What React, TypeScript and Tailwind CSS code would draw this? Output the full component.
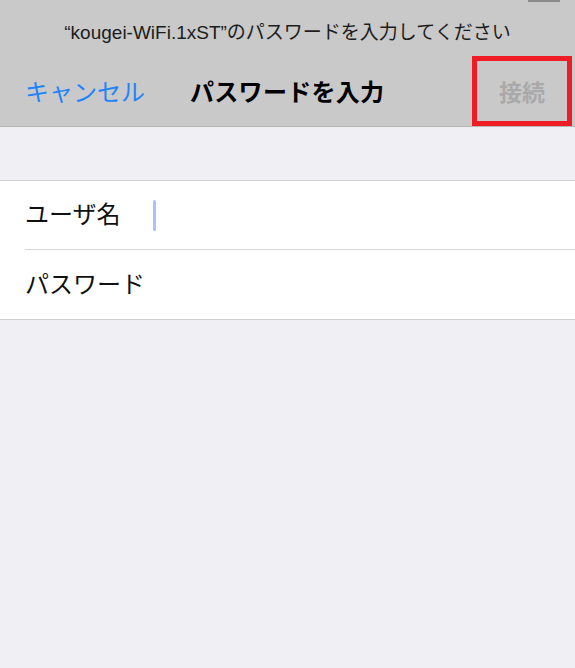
import React from 'react';

const font = { fontFamily: '"Liberation Sans", "Noto Sans CJK JP", sans-serif' };

export default function App() {
  return (
    <div className="min-h-[668px] w-[575px] bg-[#efeff4] overflow-hidden" style={font}>
      {/* Header */}
      <header className="relative bg-[#c9c9c9] border-b border-[#b5b5b5]">
        <div className="absolute top-0 right-[15px] h-[2px] w-[32px] bg-[#8a8a8a]" />
        <div className="h-[56px] pt-[10px] flex items-center justify-center text-[19px] text-[#1c1c1c]">
          “kougei-WiFi.1xST”のパスワードを入力してください
        </div>
        <div className="h-[70px] flex items-center">
          <button className="pl-[25px] pt-[4px] text-[24px] text-[#1f83fa]">キャンセル</button>
          <h1 className="ml-[45px] pt-[4px] text-[24px] font-bold text-black tracking-[0.3px]">パスワードを入力</h1>
          <div className="ml-auto mr-[3px] w-[100px] h-[70px] border-[5px] border-[#ee1c25] flex items-center justify-center">
            <span className="pt-[4px] text-[23px] font-bold text-[#a9a9a9]">接続</span>
          </div>
        </div>
      </header>

      {/* Form */}
      <div className="mt-[53px] bg-white border-t border-b border-[#d0d0d4]">
        <div className="ml-[25px] h-[69px] border-b border-[#d6d6da] flex items-center">
          <span className="w-[128px] text-[24px] text-[#111]">ユーザ名</span>
          <span className="w-[3px] h-[31px] rounded-sm bg-[#a9c1ff]" />
        </div>
        <div className="ml-[25px] h-[69px] flex items-center">
          <span className="text-[24px] text-[#111]">パスワード</span>
        </div>
      </div>
    </div>
  );
}
